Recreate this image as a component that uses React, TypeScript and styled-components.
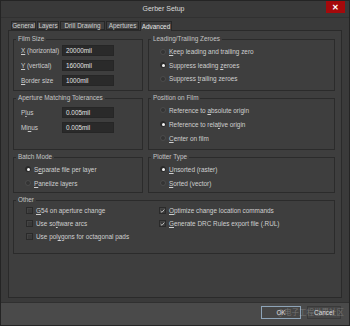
import React from 'react';
import styled, { createGlobalStyle } from 'styled-components';

const GlobalStyle = createGlobalStyle`
  html, body { margin: 0; padding: 0; background: #2a2a2a; }
  * { box-sizing: border-box; }
`;

const Window = styled.div`
  position: relative;
  width: 350px;
  height: 326px;
  display: flex;
  flex-direction: column;
  background: #3a3a3a;
  border: 1px solid #242424;
  font-family: "Liberation Sans", Arial, sans-serif;
  font-size: 6.4px;
  color: #d0d0d0;
  overflow: hidden;
`;

const TitleBar = styled.div`
  height: 17px;
  display: flex;
  align-items: flex-start;
  background: #393939;
  border-bottom: 1px solid #313131;
`;

const Title = styled.div`
  flex: 1;
  text-align: center;
  line-height: 16px;
  font-size: 7px;
  color: #dadada;
`;

const CloseButton = styled.div`
  width: 19px;
  height: 12px;
  margin-right: 4px;
  background: #a5090b;
  color: #ffffff;
  display: flex;
  align-items: center;
  justify-content: center;
  font-size: 8px;
  font-weight: bold;
`;

const Body = styled.div`
  display: flex;
  flex-direction: column;
  padding: 3px 7px 4px 7px;
  border-bottom: 1px solid #303030;
`;

const TabRow = styled.div`
  display: flex;
  margin-left: 3px;
  height: 9px;
  gap: 1px;
`;

const Tab = styled.div<{ $w: number; $active?: boolean }>`
  width: ${(p) => p.$w}px;
  height: ${(p) => (p.$active ? 10 : 9)}px;
  display: flex;
  align-items: center;
  justify-content: center;
  border: 1px solid #272727;
  border-bottom: ${(p) => (p.$active ? 'none' : '1px solid #272727')};
  background: ${(p) => (p.$active ? '#3e3e3e' : '#404040')};
  color: ${(p) => (p.$active ? '#e8e8e8' : '#d0d0d0')};
  white-space: nowrap;
  position: relative;
  z-index: 1;
`;

const Panel = styled.div`
  height: 268px;
  border: 1px solid #2a2a2a;
  background: #3e3e3e;
  padding: 4px 0 0 4px;
  display: grid;
  grid-template-columns: 130px 187px;
  grid-template-rows: 56px 56px 40px 58px;
  column-gap: 5px;
  row-gap: 3px;
  align-content: start;
`;

const Group = styled.fieldset<{ $span?: boolean; $pt: number }>`
  margin: 0;
  padding: ${(p) => p.$pt}px 0 0 0;
  min-width: 0;
  border: 1px solid #2b2b2b;
  grid-column: ${(p) => (p.$span ? '1 / span 2' : 'auto')};
`;

const Legend = styled.legend`
  margin-left: 2px;
  padding: 0 2px;
  line-height: 8px;
  font-size: 6.4px;
  color: #c4c4c4;
`;

const FieldGrid = styled.div`
  display: grid;
  grid-template-columns: 41px 52px;
  row-gap: 4px;
  padding-left: 7px;
  align-items: center;
`;

const FieldLabel = styled.span`
  color: #cdcdcd;
  white-space: nowrap;
`;

const Input = styled.div`
  height: 11px;
  background: #2a2a2a;
  border: 1px solid #262626;
  color: #e2e2e2;
  display: flex;
  align-items: center;
  padding-left: 3px;
`;

const OptionList = styled.div<{ $row: number; $left: number }>`
  display: grid;
  grid-auto-rows: ${(p) => p.$row}px;
  padding-left: ${(p) => p.$left}px;
  align-items: center;
`;

const Option = styled.div`
  display: flex;
  align-items: center;
  gap: 3px;
  white-space: nowrap;
  color: #cfcfcf;
`;

const Radio = styled.span<{ $on?: boolean }>`
  position: relative;
  width: 6px;
  height: 6px;
  border-radius: 50%;
  background: ${(p) => (p.$on ? '#2a2a2a' : '#343434')};
  border: 1px solid ${(p) => (p.$on ? '#2a2a2a' : '#4c4c4c')};
  flex: none;
  &::after {
    content: '';
    display: ${(p) => (p.$on ? 'block' : 'none')};
    position: absolute;
    left: 0.5px;
    top: 0.5px;
    width: 3px;
    height: 3px;
    border-radius: 50%;
    background: #f4f4f4;
  }
`;

const Check = styled.span`
  width: 7px;
  height: 7px;
  background: #3a3a3a;
  border: 1px solid #2a2a2a;
  box-shadow: inset 1px 1px 0 #444;
  flex: none;
  display: flex;
  align-items: center;
  justify-content: center;
`;

const OtherGrid = styled.div`
  display: grid;
  grid-template-columns: 133px 1fr;
  padding-left: 12px;
`;

const Footer = styled.div`
  flex: 1;
  background: #4a4a4a;
  display: flex;
  justify-content: flex-end;
  align-items: flex-start;
  gap: 6px;
  padding: 3px 8px 0 0;
`;

const Button = styled.div<{ $w: number; $focus?: boolean }>`
  width: ${(p) => p.$w}px;
  height: 13px;
  display: flex;
  align-items: center;
  justify-content: center;
  background: #464646;
  border: 1px solid ${(p) => (p.$focus ? '#8ea4b8' : '#3a3a3a')};
  color: #dedede;
  font-size: 6.4px;
`;

const Watermark = styled.div`
  position: absolute;
  left: 276px;
  top: 305px;
  font-family: "Noto Sans CJK SC", sans-serif;
  font-size: 7.5px;
  color: rgba(230, 230, 230, 0.28);
  white-space: nowrap;
  pointer-events: none;
`;

const CheckMark = () => (
  <svg width="6" height="6" viewBox="0 0 6 6">
    <path d="M0.8 3.1 L2.4 4.6 L5.2 1.2" fill="none" stroke="#d8d8d8" strokeWidth="1" />
  </svg>
);

const CheckOption = ({ on, children }: { on?: boolean; children: React.ReactNode }) => (
  <Option>
    <Check>{on && <CheckMark />}</Check>
    <span>{children}</span>
  </Option>
);

const RadioOption = ({ on, children }: { on?: boolean; children: React.ReactNode }) => (
  <Option>
    <Radio $on={on} />
    <span>{children}</span>
  </Option>
);

export default function App() {
  return (
    <>
      <GlobalStyle />
      <Window>
        <TitleBar>
          <Title>Gerber Setup</Title>
          <CloseButton>✕</CloseButton>
        </TitleBar>
        <Body>
          <TabRow>
            <Tab $w={25}>General</Tab>
            <Tab $w={22}>Layers</Tab>
            <Tab $w={45}>Drill Drawing</Tab>
            <Tab $w={33}>Apertures</Tab>
            <Tab $w={32} $active>Advanced</Tab>
          </TabRow>
          <Panel>
            <Group $pt={2}>
              <Legend>Film Size</Legend>
              <FieldGrid>
                <FieldLabel><u>X</u> (horizontal)</FieldLabel>
                <Input>20000mil</Input>
                <FieldLabel><u>Y</u> (vertical)</FieldLabel>
                <Input>16000mil</Input>
                <FieldLabel><u>B</u>order size</FieldLabel>
                <Input>1000mil</Input>
              </FieldGrid>
            </Group>
            <Group $pt={2}>
              <Legend>Leading/Trailing Zeroes</Legend>
              <OptionList $row={13.5} $left={11}>
                <RadioOption><u>K</u>eep leading and trailing zero</RadioOption>
                <RadioOption on>Suppress leading <u>z</u>eroes</RadioOption>
                <RadioOption>Suppress <u>t</u>railing zeroes</RadioOption>
              </OptionList>
            </Group>
            <Group $pt={5}>
              <Legend>Aperture Matching Tolerances</Legend>
              <FieldGrid>
                <FieldLabel>P<u>l</u>us</FieldLabel>
                <Input>0.005mil</Input>
                <FieldLabel>Mi<u>n</u>us</FieldLabel>
                <Input>0.005mil</Input>
              </FieldGrid>
            </Group>
            <Group $pt={1}>
              <Legend>Position on Film</Legend>
              <OptionList $row={14} $left={11}>
                <RadioOption>Reference to <u>a</u>bsolute origin</RadioOption>
                <RadioOption on>Reference to rela<u>t</u>ive origin</RadioOption>
                <RadioOption><u>C</u>enter on film</RadioOption>
              </OptionList>
            </Group>
            <Group $pt={1}>
              <Legend>Batch Mode</Legend>
              <OptionList $row={14} $left={11}>
                <RadioOption on>S<u>e</u>parate file per layer</RadioOption>
                <RadioOption><u>P</u>anelize layers</RadioOption>
              </OptionList>
            </Group>
            <Group $pt={1}>
              <Legend>Plotter Type</Legend>
              <OptionList $row={14} $left={11}>
                <RadioOption on><u>U</u>nsorted (raster)</RadioOption>
                <RadioOption><u>S</u>orted (vector)</RadioOption>
              </OptionList>
            </Group>
            <Group $span $pt={0}>
              <Legend>Other</Legend>
              <OtherGrid>
                <OptionList $row={13} $left={0}>
                  <CheckOption><u>G</u>54 on aperture change</CheckOption>
                  <CheckOption>Use so<u>f</u>tware arcs</CheckOption>
                  <CheckOption>Use pol<u>y</u>gons for octagonal pads</CheckOption>
                </OptionList>
                <OptionList $row={13} $left={0}>
                  <CheckOption on><u>O</u>ptimize change location commands</CheckOption>
                  <CheckOption on><u>G</u>enerate DRC Rules export file (.RUL)</CheckOption>
                </OptionList>
              </OtherGrid>
            </Group>
          </Panel>
        </Body>
        <Footer>
          <Button $w={40} $focus>OK</Button>
          <Button $w={34}>Cancel</Button>
        </Footer>
        <Watermark>@电子工程世界社区</Watermark>
      </Window>
    </>
  );
}
